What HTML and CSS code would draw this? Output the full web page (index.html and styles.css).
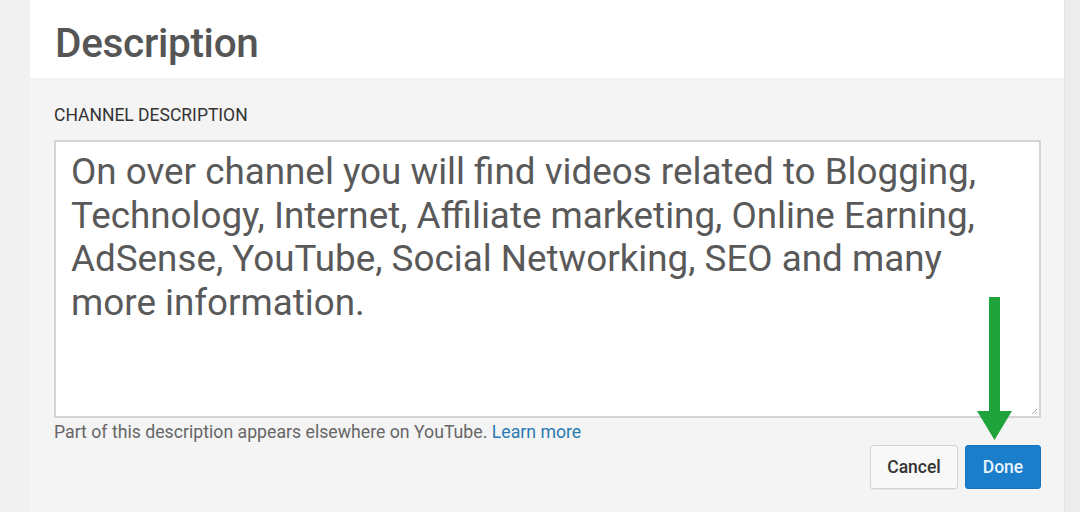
FILE: index.html
```html
<!DOCTYPE html>
<html>
<head>
<meta charset="utf-8">
<link rel="stylesheet" href="styles.css">
</head>
<body>
<div class="page">
  <div class="card">
    <div class="card-head">
      <h1 class="title">Description</h1>
    </div>
    <div class="card-body">
      <div class="label">CHANNEL DESCRIPTION</div>
      <div class="textarea">
        <div class="ta-text">On over channel you will find videos related to Blogging,<br>Technology, Internet, Affiliate marketing, Online Earning,<br>AdSense, YouTube, Social Networking, SEO and many<br>more information.</div>
        <svg class="grip" width="8" height="8" viewBox="0 0 8 8"><path d="M7 2 L2 7 M7 5 L5 7" stroke="#aaa" stroke-width="1"/></svg>
      </div>
      <div class="hint">Part of this description appears elsewhere on YouTube. <a class="link">Learn more</a></div>
      <div class="actions">
        <button class="btn btn-cancel">Cancel</button>
        <button class="btn btn-done">Done</button>
      </div>
      <svg class="arrow" width="36" height="144" viewBox="0 0 36 144"><rect x="12" y="0" width="11" height="116" fill="#1fa33b"/><polygon points="0,114 35,114 17.5,143" fill="#1fa33b"/></svg>
    </div>
  </div>
  <div class="side"></div>
</div>
</body>
</html>
```
FILE: styles.css
```css
html, body {
  margin: 0;
  padding: 0;
}
body {
  width: 1080px;
  height: 512px;
  overflow: hidden;
  background: #f1f1f1;
  font-family: Roboto, "Liberation Sans", sans-serif;
}
.page {
  display: flex;
  height: 512px;
  padding-left: 30px;
  box-sizing: border-box;
}
.card {
  width: 1034px;
  display: flex;
  flex-direction: column;
  background: #f4f4f4;
}
.side {
  flex: 1;
  background: #ececec;
  border-left: 1px solid #e4e4e4;
}
.card-head {
  background: #fff;
  height: 78px;
  box-sizing: border-box;
  padding: 18px 0 0 25px;
}
.title {
  margin: 0;
  font-size: 40.5px;
  font-weight: 500;
  color: #555;
  line-height: 50px;
  letter-spacing: -0.3px;
}
.card-body {
  position: relative;
  flex: 1;
  padding: 27px 0 0 24px;
}
.label {
  font-size: 17.5px;
  color: #333;
  line-height: 20px;
}
.textarea {
  position: relative;
  margin-top: 15px;
  width: 987px;
  height: 278px;
  box-sizing: border-box;
  background: #fff;
  border: 2px solid #d4d4d4;
  padding: 8px 0 0 15px;
}
.ta-text {
  font-size: 36.8px;
  line-height: 43.5px;
  color: #595959;
}
.grip {
  position: absolute;
  right: 1px;
  bottom: 1px;
}
.hint {
  margin-top: 3px;
  font-size: 17.7px;
  color: #666;
  line-height: 22px;
}
.link {
  color: #2b79b3;
}
.actions {
  display: flex;
  justify-content: flex-end;
  gap: 7px;
  width: 987px;
  margin-top: 2px;
}
.btn {
  height: 44px;
  font-family: Roboto, "Liberation Sans", sans-serif;
  font-size: 17.5px;
  font-weight: 500;
  border-radius: 3px;
  padding: 0;
}
.btn-cancel {
  width: 88px;
  background: #f8f8f8;
  border: 1px solid #d3d3d3;
  color: #333;
  box-shadow: 0 1px 0 rgba(0,0,0,0.05);
}
.btn-done {
  width: 76px;
  background: #1b7ecb;
  border: 1px solid #1673bd;
  color: #eaf4fc;
}
.arrow {
  position: absolute;
  left: 947px;
  top: 219px;
}
```
